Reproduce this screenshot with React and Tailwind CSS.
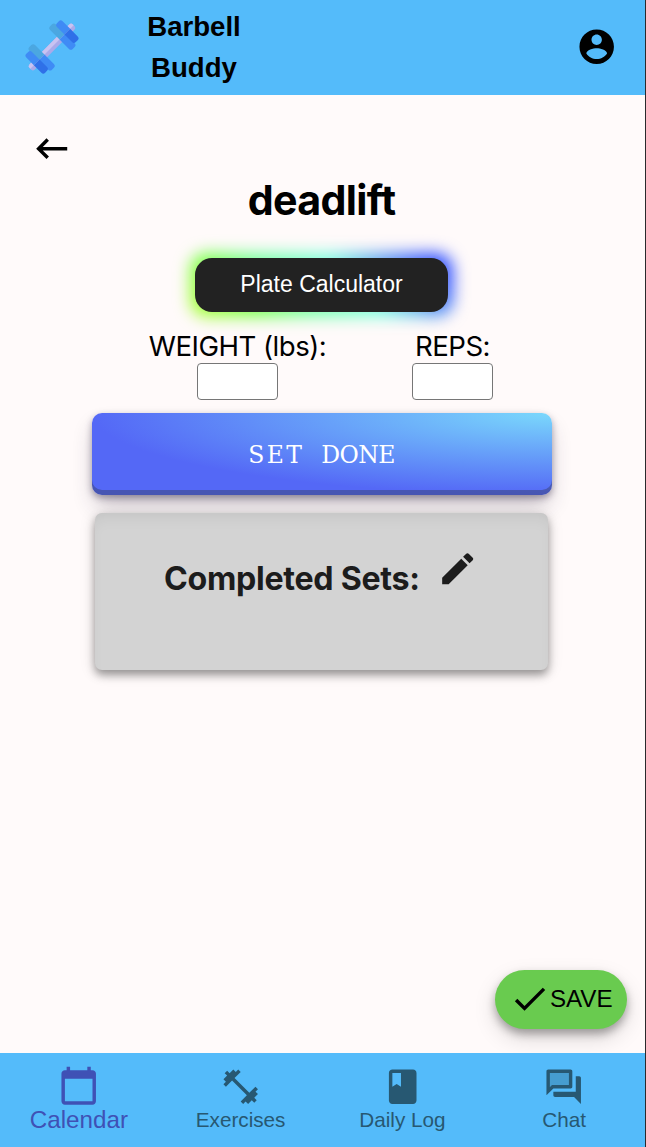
const icons = {
  account:
    "M12 2C6.48 2 2 6.48 2 12s4.48 10 10 10 10-4.48 10-10S17.52 2 12 2zm0 3c1.66 0 3 1.34 3 3s-1.34 3-3 3-3-1.34-3-3 1.34-3 3-3zm0 14.2c-2.5 0-4.71-1.28-6-3.22.03-1.99 4-3.08 6-3.08 1.99 0 5.97 1.09 6 3.08-1.29 1.94-3.5 3.22-6 3.22z",
  back: "M21 11H6.83l3.58-3.59L9 6l-6 6 6 6 1.41-1.41L6.83 13H21z",
  edit: "M3 17.25V21h3.75L17.81 9.94l-3.75-3.75L3 17.25zM20.71 7.04c.39-.39.39-1.02 0-1.41l-2.34-2.34c-.39-.39-1.02-.39-1.41 0l-1.83 1.83 3.75 3.75 1.83-1.83z",
  check: "M9 16.17L4.83 12l-1.42 1.41L9 19 21 7l-1.41-1.41z",
  calendar:
    "M20 3h-1V1h-2v2H7V1H5v2H4c-1.1 0-2 .9-2 2v16c0 1.1.9 2 2 2h16c1.1 0 2-.9 2-2V5c0-1.1-.9-2-2-2zm0 18H4V8h16v13z",
  fitness:
    "M20.57 14.86L22 13.43 20.57 12 17 15.57 8.43 7 12 3.43 10.57 2 9.14 3.43 7.71 2 5.57 4.14 4.14 2.71 2.71 4.14l1.43 1.43L2 7.71l1.43 1.43L2 10.57 3.43 12 7 8.43 15.57 17 12 20.57 13.43 22l1.43-1.43L16.29 22l2.14-2.14 1.43 1.43 1.43-1.43-1.43-1.43L22 16.29z",
  book: "M18 2H6c-1.1 0-2 .9-2 2v16c0 1.1.9 2 2 2h12c1.1 0 2-.9 2-2V4c0-1.1-.9-2-2-2zM6 4h5v8l-2.5-1.5L6 12V4z",
  chat: "M16 13c.55 0 1-.45 1-1V3c0-.55-.45-1-1-1H3c-.55 0-1 .45-1 1v14l4-4h10zm-12-.83V4h11v7H5.17L4 12.17zM22 7c0-.55-.45-1-1-1h-2v9H6v2c0 .55.45 1 1 1h11l4 4V7z",
};

function Icon({ name, className = "" }) {
  return (
    <svg viewBox="0 0 24 24" fill="currentColor" className={`size-[41.4px] shrink-0 ${className}`}>
      {name === "chat" && <path opacity=".3" d="M15 11V4H4v8.17L5.17 11H6z" />}
      <path d={icons[name]} />
    </svg>
  );
}

function Logo() {
  return (
    <svg viewBox="-96 -96 192 192" className="size-[64px]">
      <g transform="rotate(-45)">
        <rect x="-92" y="-11" width="184" height="22" rx="7" fill="#aaaaea" />
        <path d="M-85-11H85a7 7 0 0 1 7 7V0H-92v-4a7 7 0 0 1 7-7z" fill="#c9c3f2" />
        <path d="M-56 0v-40a8 8 0 0 1 8-8h8a8 8 0 0 1 8 8V0z" fill="#4ba7e1" />
        <path d="M-56 0v40a8 8 0 0 0 8 8h8a8 8 0 0 0 8-8V0z" fill="#3f8bf5" />
        <path d="M-77 0v-32a8 8 0 0 1 8-8h8a8 8 0 0 1 8 8V0z" fill="#3f8bf5" />
        <path d="M-77 0v32a8 8 0 0 0 8 8h8a8 8 0 0 0 8-8V0z" fill="#2f70e8" />
        <path d="M56 0v-40a8 8 0 0 0-8-8h-8a8 8 0 0 0-8 8V0z" fill="#4ba7e1" />
        <path d="M56 0v40a8 8 0 0 1-8 8h-8a8 8 0 0 1-8-8V0z" fill="#3f8bf5" />
        <path d="M77 0v-32a8 8 0 0 0-8-8h-8a8 8 0 0 0-8 8V0z" fill="#3f8bf5" />
        <path d="M77 0v32a8 8 0 0 1-8 8h-8a8 8 0 0 1-8-8V0z" fill="#2f70e8" />
      </g>
    </svg>
  );
}

function Field({ label, className }) {
  return (
    <label className={`flex flex-col items-center ${className}`}>
      <span className="h-[34px] whitespace-nowrap leading-[34px]">{label}</span>
      <input className="h-[37px] w-[81px] rounded-[4px] border-[1.5px] border-[#767676] bg-white px-2 text-xl outline-none" />
    </label>
  );
}

function Tab({ icon, label, active }) {
  return (
    <button
      className={`flex flex-1 flex-col items-center ${active ? "pt-[12px] text-[#3f51b5]" : "pt-[13.5px] text-[#275872]"}`}
    >
      <Icon name={icon} />
      <span
        className={
          active
            ? "text-[24.2px] leading-[28px]"
            : "text-[20.7px] leading-[26px]"
        }
      >
        {label}
      </span>
    </button>
  );
}

export default function App() {
  return (
    <div className="flex h-[1147px] w-[646px] flex-col overflow-hidden border-r border-[#2a2a2c] bg-[#fffafa] font-['Inter',sans-serif] text-black">
      <header className="flex h-[95px] shrink-0 items-center justify-between bg-[#54bbfa] pb-[1px] pl-[20px] pr-[28px] font-['Liberation_Sans',sans-serif]">
        <div className="flex items-center">
          <Logo />
          <h1 className="ml-[63px] w-[94px] text-center text-[27.6px] font-bold leading-[41.5px]">
            Barbell Buddy
          </h1>
        </div>
        <Icon name="account" />
      </header>

      <main className="flex flex-1 flex-col items-center pr-[2px]">
        <button className="ml-[31px] mt-[33px] self-start">
          <Icon name="back" />
        </button>
        <h2 className="mt-[6px] h-[50px] text-[41.2px] font-bold leading-[50px] tracking-[-0.65px]">
          deadlift
        </h2>
        <div className="relative isolate mt-[32.5px] h-[54px] w-[253px]">
          <div className="absolute -inset-[5px] -z-10 rounded-[17px] bg-[linear-gradient(45deg,#b4ff30_0%,#7aff4a_22%,#76ffa0_38%,#7fffe0_60%,#5f9ff0_76%,#3050ff_90%)] blur-[8px]" />
          <button className="size-full rounded-[17px] bg-[#222] pb-[1px] font-['Liberation_Sans',sans-serif] text-[23px] text-white">
            Plate Calculator
          </button>
        </div>

        <div className="mt-[17px] flex w-full text-[27.6px] tracking-[-0.5px]">
          <Field label="WEIGHT (lbs):" className="ml-[137.5px] w-[200px]" />
          <Field label="REPS:" className="ml-[65px] w-[100px]" />
        </div>

        <button className="mt-[13px] flex h-[82.5px] w-[460px] shrink-0 items-center justify-center gap-[17px] rounded-[10px] bg-[radial-gradient(100%_100%_at_100%_0%,#7ad8fc_0%,#5468f6_100%)] pt-[2px] font-['DejaVu_Serif',serif] text-[23.5px] text-white shadow-[0_3px_7px_rgba(45,35,66,0.4),0_12px_22px_-4px_rgba(45,35,66,0.3),inset_0_-5px_0_rgba(58,65,111,0.5)]">
          <span className="tracking-[2.4px]">SET</span>
          <span className="tracking-[-0.6px]">DONE</span>
        </button>

        <section className="mt-[18px] flex h-[157px] w-[453px] shrink-0 rounded-[7px] bg-[#d3d3d3] pl-[69px] pt-[35px] text-[#1c1c1c] shadow-[0_5px_9px_rgba(0,0,0,0.35),0_2px_16px_rgba(0,0,0,0.15),inset_0_10px_18px_-10px_rgba(0,0,0,0.1)]">
          <h3 className="mt-[11px] h-[40px] w-[256px] whitespace-nowrap text-[32.2px] font-bold leading-[40px] tracking-[-0.3px]">
            Completed Sets:
          </h3>
          <Icon name="edit" className="ml-[16.5px]" />
        </section>

        <button className="mb-[24px] mr-[16px] mt-auto flex h-[59px] w-[132px] items-center self-end rounded-full bg-[#69cb4f] pl-[13.5px] font-['Liberation_Sans',sans-serif] text-[24.2px] shadow-[0_5px_9px_rgba(0,0,0,0.3),0_9px_22px_rgba(0,0,0,0.15)]">
          <Icon name="check" />
          SAVE
        </button>
      </main>

      <nav className="-ml-[2px] flex h-[94.5px] shrink-0 items-start bg-[#54bbfa] font-['Liberation_Sans',sans-serif]">
        <Tab icon="calendar" label="Calendar" active />
        <Tab icon="fitness" label="Exercises" />
        <Tab icon="book" label="Daily Log" />
        <Tab icon="chat" label="Chat" />
      </nav>
    </div>
  );
}
